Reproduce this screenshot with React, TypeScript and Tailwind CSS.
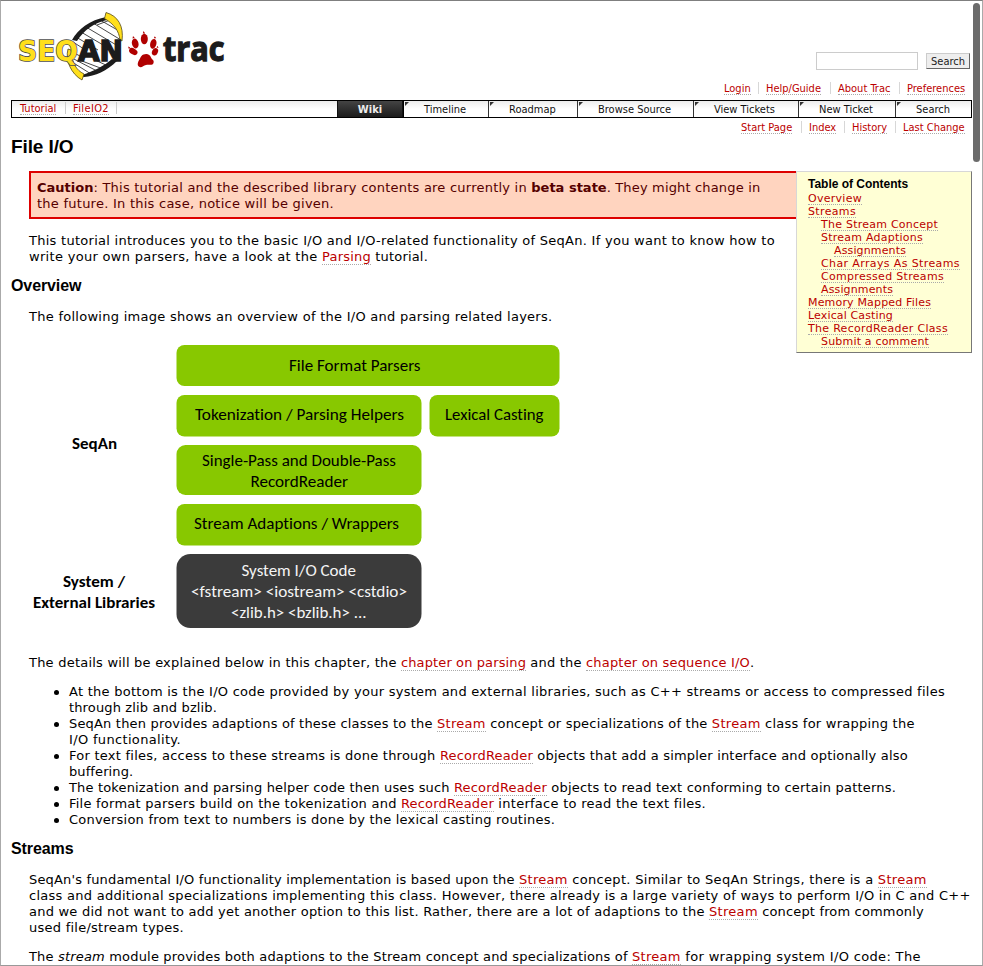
import type { ReactNode } from "react";

type SpanProps = { t?: string; children: ReactNode };

function S({ t = "", children }: SpanProps) {
  return <span className={t}>{children}</span>;
}

function A({ t = "", children }: SpanProps) {
  return (
    <a href="#" className={`border-b border-dotted border-[#aaa] text-[#b00] ${t}`}>
      {children}
    </a>
  );
}

function SmallLink({ t = "", children }: SpanProps) {
  return (
    <a href="#" className={`inline-block border-b border-dotted border-[#aaa] leading-[11px] text-[#b00] ${t}`}>
      {children}
    </a>
  );
}

function Line({ children }: { children: ReactNode }) {
  return <span className="block h-4 whitespace-pre">{children}</span>;
}

function Item({ children }: { children: ReactNode }) {
  return (
    <li className="relative before:absolute before:top-[6px] before:left-[-15px] before:size-[5px] before:rounded-full before:bg-black">
      {children}
    </li>
  );
}

function Logo() {
  return (
    <svg width="224" height="74" viewBox="14 9 224 74" className="block overflow-visible">
      <path d="M73 38 C80 27 92 20 106 16 L120 30 L121 50 L103 64 L84 75 L72 66 L67 52 Z" fill="#fff" />
      <g stroke="#333" strokeWidth=".9">
        <path d="M100 20 L121 32 M93 23 L121 40 M86 27 L118 46 M81 32 L110 49 M76 37 L98 50 M73 42 L84 49 M97 25 L110 20" />
        <path d="M70 51 L84 58 M70 57 L97 71 M72 62 L91 74 M82 61 L103 69 M95 60 L108 66 M74 69 L84 77" />
      </g>
      <path d="M72 40 C78 29 90 20 106 17 L107 20 C94 23 84 30 77 41 Z" fill="#1c1c1c" />
      <path d="M82 75 C94 71 104 66 112 59 L117 61 C107 71 95 76 84 77 Z" fill="#1c1c1c" />
      <path d="M106 12.5 C118 16 124 26 122 41 L120 40 C119 31 114 24 104.500 18.500 Z" fill="#ffdf1b" stroke="#54491a" strokeWidth=".8" />
      <path d="M68 49 C65 60 71 74 82 80 L84 74 C76 70 72 63 71 50 Z" fill="#ffdf1b" stroke="#54491a" strokeWidth=".8" />
      <g fontFamily="'DejaVu Sans', Verdana, sans-serif" fontWeight="700" fontSize="28.500">
        <text x="18" y="61" textLength="60" lengthAdjust="spacingAndGlyphs" fill="#ffdf1b" stroke="#4d4d4d" strokeWidth="1.600" paintOrder="stroke">SEQ</text>
        <text x="78" y="61" textLength="45" lengthAdjust="spacingAndGlyphs" fill="#1c1c1c" stroke="#1c1c1c" strokeWidth="1.500">AN</text>
      </g>
      <g fill="#b00000">
        <ellipse cx="144.300" cy="39" rx="3.500" ry="5.200" />
        <ellipse cx="135.200" cy="43.500" rx="3.300" ry="5" transform="rotate(-14 135.200 43.500)" />
        <ellipse cx="153.300" cy="43.800" rx="3.100" ry="5" transform="rotate(14 153.300 43.800)" />
        <ellipse cx="133.300" cy="51.500" rx="4.500" ry="3" transform="rotate(30 133.300 51.500)" />
        <ellipse cx="155" cy="51.800" rx="2.900" ry="3.800" transform="rotate(25 155 51.800)" />
        <path d="M143.500 31 L145.200 33.500 L142.800 33.500 Z M133 36 L134.800 38 L132.500 38.500 Z M154.800 36.200 L156.200 38.200 L153.800 38.200 Z M128 46.500 L130.200 47.500 L129 49.200 Z M157.500 45.800 L158.500 48 L156.500 47.500 Z" />
        <path d="M143.500 54.500 C147 53 150 54.500 151 57.500 C152 60 154.500 60 153.500 63 C152.500 66 149 64 146 65 C143 65.500 141.500 68.500 138.800 66.500 C136.500 64.500 138.500 61 140 58.500 C141 56.500 141.800 55 143.500 54.500 Z" />
      </g>
      <text x="163" y="60.500" textLength="61.500" lengthAdjust="spacingAndGlyphs" fontFamily="'Open Sans', 'Noto Sans', sans-serif" fontWeight="700" fontSize="33.500" fill="#1c1c1c" stroke="#1c1c1c" strokeWidth="1.300">trac</text>
    </svg>
  );
}

function LinkBar({ items }: { items: [string, string][] }) {
  return (
    <ul className="flex justify-end">
      {items.map(([label, box]) => (
        <li key={label} className={`flex h-3 items-start border-[#d7d7d7] pt-px whitespace-nowrap not-last:border-r ${box}`}>
          <SmallLink>{label}</SmallLink>
        </li>
      ))}
    </ul>
  );
}

function Tab({ label, box }: { label: string; box: string }) {
  return (
    <li className={`relative flex items-center border-l border-[#333] pt-0.5 ${box}`}>
      <svg width="4" height="4" className="absolute top-px left-px">
        <path d="M0 0 H4 L0 4 Z" fill="#333" />
      </svg>
      {label}
    </li>
  );
}

function Toc() {
  const rows: [string, string, string][] = [
    ["Overview", "", "tracking-[0.28px]"],
    ["Streams", "", "tracking-[0.35px]"],
    ["The Stream Concept", "pl-[13px]", "tracking-[0.24px]"],
    ["Stream Adaptions", "pl-[13px]", "tracking-[0.24px]"],
    ["Assignments", "pl-[26px]", "tracking-[0.14px]"],
    ["Char Arrays As Streams", "pl-[13px]", "tracking-[0.38px]"],
    ["Compressed Streams", "pl-[13px]", "tracking-[0.31px]"],
    ["Assignments", "pl-[13px]", "tracking-[0.14px]"],
    ["Memory Mapped Files", "", "tracking-[0.17px]"],
    ["Lexical Casting", "", "tracking-[0.14px]"],
    ["The RecordReader Class", "", "tracking-[0.3px]"],
    ["Submit a comment", "pl-[13px]", "tracking-[0.19px]"],
  ];
  return (
    <aside className="float-right h-[182px] w-[176px] border border-t-[#d7d7d7] border-r-[#777] border-b-[#777] border-l-[#d7d7d7] bg-[#ffffd5] pt-1 pl-[11px] text-[11px] leading-[13px]">
      <h4 className="h-4 font-['Liberation_Sans',Arial,sans-serif] text-[12px] leading-4 font-bold tracking-[-0.02px] text-black">Table of Contents</h4>
      <ul>
        {rows.map(([label, indent, t], i) => (
          <li key={i} className={`h-[13px] whitespace-nowrap ${indent}`}>
            <SmallLink t={t}>{label}</SmallLink>
          </li>
        ))}
      </ul>
    </aside>
  );
}

function Diagram() {
  return (
    <svg width="540" height="300" viewBox="29 340 540 300" className="block [font-variant-ligatures:none]" fontFamily="Carlito, 'Open Sans', 'Noto Sans', sans-serif" fontSize="16.500">
      <g fill="#88c800">
        <rect x="176.500" y="345" width="383" height="41" rx="8" />
        <rect x="176.500" y="395" width="245" height="41.500" rx="8" />
        <rect x="429.500" y="395" width="130" height="41.500" rx="8" />
        <rect x="176.500" y="445" width="245" height="50" rx="9" />
        <rect x="176.500" y="504" width="245" height="41.500" rx="8" />
      </g>
      <rect x="176.500" y="554" width="245" height="74" rx="14" fill="#3b3b3b" />
      <g fill="#000">
        <text x="289" y="371" textLength="131.500" lengthAdjust="spacingAndGlyphs">File Format Parsers</text>
        <text x="195" y="420" textLength="209" lengthAdjust="spacingAndGlyphs">Tokenization / Parsing Helpers</text>
        <text x="445" y="420" textLength="98.500" lengthAdjust="spacingAndGlyphs">Lexical Casting</text>
        <text x="202" y="466" textLength="194" lengthAdjust="spacingAndGlyphs">Single-Pass and Double-Pass</text>
        <text x="250.500" y="487" textLength="97.500" lengthAdjust="spacingAndGlyphs">RecordReader</text>
        <text x="194" y="529" textLength="205" lengthAdjust="spacingAndGlyphs">Stream Adaptions / Wrappers</text>
      </g>
      <g fill="#f4f4f4">
        <text x="241.500" y="576" textLength="114.500" lengthAdjust="spacingAndGlyphs">System I/O Code</text>
        <text x="191" y="597" textLength="216" lengthAdjust="spacingAndGlyphs">&lt;fstream&gt; &lt;iostream&gt; &lt;cstdio&gt;</text>
        <text x="231" y="618" textLength="135.500" lengthAdjust="spacingAndGlyphs">&lt;zlib.h&gt; &lt;bzlib.h&gt; ...</text>
      </g>
      <g fill="#000" fontWeight="700">
        <text x="72" y="449" textLength="45" lengthAdjust="spacingAndGlyphs">SeqAn</text>
        <text x="63" y="587" textLength="62" lengthAdjust="spacingAndGlyphs">System /</text>
        <text x="33" y="608" textLength="122" lengthAdjust="spacingAndGlyphs">External Libraries</text>
      </g>
    </svg>
  );
}

const H2 = "ml-[-18px] h-5 font-['Liberation_Sans',Arial,sans-serif] text-[16px] leading-5 font-bold tracking-[-0.1px] text-black";

export default function App() {
  return (
    <div className="relative h-[966px] w-[983px] overflow-hidden border border-t-[#7f7f7f] border-r-[#aaa] border-b-[#999] border-l-[#aaa] bg-white pr-[10px] pl-[10px] font-['DejaVu_Sans',Verdana,sans-serif] text-[13px] leading-4 text-black">
      <div className="absolute top-0.5 right-[2px] h-[159px] w-[7px] rounded-full bg-[#6b6b6b]" />

      <header className="flex h-[99px] flex-col font-['DejaVu_Sans_Condensed','DejaVu_Sans',Tahoma,sans-serif] text-[11px] leading-3">
        <div className="flex h-[81px] justify-between pt-2">
          <div className="pl-[3px]">
            <Logo />
          </div>
          <form className="flex items-start gap-2 pt-[43px] pr-0.5">
            <input className="h-[18px] w-[102px] border border-[#ccc] bg-white outline-none" />
            <button type="button" className="mt-px h-4 w-11 border border-t-[#ccc] border-r-[#666] border-b-[#666] border-l-[#ccc] bg-[#eee] text-center text-[11px] leading-[15px] text-[#222]">Search</button>
          </form>
        </div>
        <LinkBar items={[["Login", "w-[35px]"], ["Help/Guide", "w-[72px] pl-[7px]"], ["About Trac", "w-[69px] pl-[7px]"], ["Preferences", "w-[72px] pl-[7px]"]]} />
      </header>

      <nav className="flex h-[18px] justify-between border border-black bg-linear-to-b from-[#ececec] via-white to-white font-['DejaVu_Sans_Condensed','DejaVu_Sans',Tahoma,sans-serif] text-[11px] leading-3 text-[#111]">
        <ul className="flex items-start pt-px pl-2">
          <li className="flex h-3 w-[46px] items-start border-r border-[#ccc] pt-px whitespace-nowrap"><SmallLink>Tutorial</SmallLink></li>
          <li className="flex h-3 w-[51px] items-start border-r border-[#ccc] pt-px pl-[7px] whitespace-nowrap"><SmallLink t="tracking-[0.35px]">FileIO2</SmallLink></li>
        </ul>
        <ul className="flex whitespace-nowrap">
          <li className="w-[66px] border-x border-[#111] bg-linear-to-b from-[#444] to-[#1c1c1c] pt-px text-center leading-[15px] font-bold text-[#eee]">Wiki</li>
          <Tab label="Timeline" box="w-[85px] pl-5 border-l-black" />
          <Tab label="Roadmap" box="w-[89px] pl-5" />
          <Tab label="Browse Source" box="w-[116px] pl-5" />
          <Tab label="View Tickets" box="w-[105px] pl-5" />
          <Tab label="New Ticket" box="w-[97px] pl-5" />
          <Tab label="Search" box="w-[76px] pl-5" />
        </ul>
      </nav>

      <div className="h-[18px] pt-[3px] font-['DejaVu_Sans_Condensed','DejaVu_Sans',Tahoma,sans-serif] text-[11px] leading-3">
        <LinkBar items={[["Start Page", "w-[61px]"], ["Index", "w-[43px] pl-[7px]"], ["History", "w-[51px] pl-[7px]"], ["Last Change", "w-[76px] pl-[7px]"]]} />
      </div>

      <h1 className="h-[35px] font-['Liberation_Sans',Arial,sans-serif] text-[19px] leading-[22px] font-bold tracking-[-0.1px]">File I/O</h1>

      <main className="pl-[18px]">
        <Toc />
        <div className="h-12 border-2 border-[#d00] bg-[#ffd4bf] px-1.5 pt-[7px] text-[#500]">
          <Line>
            <b>Caution</b>
            <S t="tracking-[0.23px]">: This tutorial and the described library contents are currently in </S>
            <b>beta state</b>
            <S t="tracking-[0.16px]">. They might change in</S>
          </Line>
          <Line><S t="tracking-[0.25px]">the future. In this case, notice will be given.</S></Line>
        </div>

        <p className="mt-3.5">
          <Line><S t="tracking-[0.27px]">This tutorial introduces you to the basic I/O and I/O-related functionality of SeqAn. If you want to know how to</S></Line>
          <Line>
            <S t="tracking-[0.306px]">write your own parsers, have a look at the </S>
            <A t="tracking-[0.22px]">Parsing</A>
            <S t="tracking-[0.18px]"> tutorial.</S>
          </Line>
        </p>

        <h2 className={`mt-[11px] ${H2}`}>Overview</h2>
        <p className="mt-[13px]"><Line><S t="tracking-[0.27px]">The following image shows an overview of the I/O and parsing related layers.</S></Line></p>

        <div className="mt-[15px] h-[300px]"><Diagram /></div>

        <p className="mt-[15px]">
          <Line>
            <S t="tracking-[0.22px]">The details will be explained below in this chapter, the </S>
            <A t="tracking-[0.114px]">chapter on parsing</A>
            <S t="tracking-[0.2px]"> and the </S>
            <A t="tracking-[0.185px]">chapter on sequence I/O</A>
            <S>.</S>
          </Line>
        </p>

        <ul className="mt-[13px] pl-10">
          <Item>
            <Line><S t="tracking-[0.265px]">At the bottom is the I/O code provided by your system and external libraries, such as C++ streams or access to compressed files</S></Line>
            <Line><S t="tracking-[0.134px]">through zlib and bzlib.</S></Line>
          </Item>
          <Item>
            <Line>
              <S t="tracking-[0.182px]">SeqAn then provides adaptions of these classes to the </S>
              <A t="tracking-[0.3px]">Stream</A>
              <S t="tracking-[0.193px]"> concept or specializations of the </S>
              <A t="tracking-[0.3px]">Stream</A>
              <S t="tracking-[0.236px]"> class for wrapping the</S>
            </Line>
            <Line><S t="tracking-[0.336px]">I/O functionality.</S></Line>
          </Item>
          <Item>
            <Line>
              <S t="tracking-[0.246px]">For text files, access to these streams is done through </S>
              <A t="tracking-[0.17px]">RecordReader</A>
              <S t="tracking-[0.195px]"> objects that add a simpler interface and optionally also</S>
            </Line>
            <Line><S t="tracking-[0.1px]">buffering.</S></Line>
          </Item>
          <Item>
            <Line>
              <S t="tracking-[0.152px]">The tokenization and parsing helper code then uses such </S>
              <A t="tracking-[0.17px]">RecordReader</A>
              <S t="tracking-[0.193px]"> objects to read text conforming to certain patterns.</S>
            </Line>
          </Item>
          <Item>
            <Line>
              <S t="tracking-[0.235px]">File format parsers build on the tokenization and </S>
              <A t="tracking-[0.17px]">RecordReader</A>
              <S t="tracking-[0.271px]"> interface to read the text files.</S>
            </Line>
          </Item>
          <Item>
            <Line><S t="tracking-[0.215px]">Conversion from text to numbers is done by the lexical casting routines.</S></Line>
          </Item>
        </ul>

        <h2 className={`mt-[11px] ${H2}`}>Streams</h2>
        <p className="mt-[13px]">
          <Line>
            <S t="tracking-[0.166px]">SeqAn's fundamental I/O functionality implementation is based upon the </S>
            <A t="tracking-[0.3px]">Stream</A>
            <S t="tracking-[0.312px]"> concept. Similar to SeqAn Strings, there is a </S>
            <A t="tracking-[0.3px]">Stream</A>
          </Line>
          <Line><S t="tracking-[0.268px]">class and additional specializations implementing this class. However, there already is a large variety of ways to perform I/O in C and C++</S></Line>
          <Line>
            <S t="tracking-[0.229px]">and we did not want to add yet another option to this list. Rather, there are a lot of adaptions to the </S>
            <A t="tracking-[0.3px]">Stream</A>
            <S t="tracking-[0.16px]"> concept from commonly</S>
          </Line>
          <Line><S t="tracking-[0.251px]">used file/stream types.</S></Line>
        </p>
        <p className="mt-[13px]">
          <Line>
            <S t="tracking-[0.179px]">The <i>stream</i> module provides both adaptions to the Stream concept and specializations of </S>
            <A t="tracking-[0.3px]">Stream</A>
            <S t="tracking-[0.336px]"> for wrapping system I/O code: The</S>
          </Line>
        </p>
      </main>
    </div>
  );
}
